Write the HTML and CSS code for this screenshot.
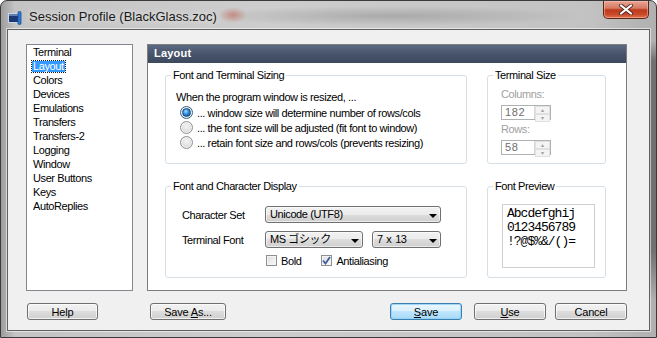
FILE: index.html
```html
<!DOCTYPE html>
<html lang="en">
  <head>
    <meta charset="UTF-8" />
    <title>Session Profile (BlackGlass.zoc)</title>
    <link rel="stylesheet" href="styles.css">
  </head>
  <body>
    <div class="window">
      <div class="titlebar">
        <div class="title">
          <svg class="app-icon" width="14" height="14" viewBox="0 0 14 14">
            <rect x="0.5" y="2.5" width="10" height="9" fill="#1b3a73" stroke="#cdd6e4" />
            <rect x="1" y="3" width="9" height="2" fill="#5e7fb3" />
            <rect x="10" y="0.5" width="3" height="13" rx="1.3" fill="#2b7ad6" stroke="#174f96" stroke-width="0.8" />
          </svg>
          <span>Session Profile (BlackGlass.zoc)</span>
        </div>
        <div class="close-btn">
          <svg width="16" height="11" viewBox="0 0 16 11">
            <path d="M3 1.5 L13 9.5 M13 1.5 L3 9.5" stroke="#5a2a20" stroke-width="4" stroke-linecap="round" />
            <path d="M3 1.5 L13 9.5 M13 1.5 L3 9.5" stroke="#ffffff" stroke-width="2.2" stroke-linecap="round" />
          </svg>
        </div>
      </div>

      <div class="client">
        <div class="main">
          <ul class="nav-list">
            <li>Terminal</li>
            <li class="selected"><span>Layout</span></li>
            <li>Colors</li>
            <li>Devices</li>
            <li>Emulations</li>
            <li>Transfers</li>
            <li>Transfers-2</li>
            <li>Logging</li>
            <li>Window</li>
            <li>User Buttons</li>
            <li>Keys</li>
            <li>AutoReplies</li>
          </ul>

          <div class="panel">
            <div class="panel-header">Layout</div>
            <div class="panel-body">
              <fieldset class="group">
                <legend>Font and Terminal Sizing</legend>
                <div class="intro">When the program window is resized, ...</div>
                <div class="radio-row">
                  <span class="radio checked"></span>
                  <span>... window size will determine number of rows/cols</span>
                </div>
                <div class="radio-row">
                  <span class="radio"></span>
                  <span>... the font size will be adjusted (fit font to window)</span>
                </div>
                <div class="radio-row">
                  <span class="radio"></span>
                  <span>... retain font size and rows/cols (prevents resizing)</span>
                </div>
              </fieldset>

              <fieldset class="group group-size">
                <legend>Terminal Size</legend>
                <div class="field-label">Columns:</div>
                <div class="spin">
                  <span class="spin-value">182</span>
                  <span class="spin-btns">
                    <span class="spin-btn">&#9652;</span>
                    <span class="spin-btn">&#9662;</span>
                  </span>
                </div>
                <div class="field-label">Rows:</div>
                <div class="spin">
                  <span class="spin-value">58</span>
                  <span class="spin-btns">
                    <span class="spin-btn">&#9652;</span>
                    <span class="spin-btn">&#9662;</span>
                  </span>
                </div>
              </fieldset>

              <fieldset class="group">
                <legend>Font and Character Display</legend>
                <div class="form-row">
                  <span class="form-label">Character Set</span>
                  <div class="select select-wide">
                    <span>Unicode (UTF8)</span><span class="arrow"></span>
                  </div>
                </div>
                <div class="form-row">
                  <span class="form-label">Terminal Font</span>
                  <div class="select select-font">
                    <span>MS ゴシック</span><span class="arrow"></span>
                  </div>
                  <div class="select select-size">
                    <span>7 x 13</span><span class="arrow"></span>
                  </div>
                </div>
                <div class="check-row">
                  <span class="check"></span>
                  <span>Bold</span>
                  <span class="check checked">
                    <svg width="9" height="9" viewBox="0 0 9 9">
                      <path d="M1 4.5 L3.5 7.5 L8 1" fill="none" stroke="#3f5aa0" stroke-width="1.8" />
                    </svg>
                  </span>
                  <span>Antialiasing</span>
                </div>
              </fieldset>

              <fieldset class="group group-preview">
                <legend>Font Preview</legend>
                <div class="preview">
                  <div>Abcdefghij</div>
                  <div>0123456789</div>
                  <div>!?@$%&amp;/()=</div>
                </div>
              </fieldset>
            </div>
          </div>
        </div>

        <div class="buttons">
          <button class="btn btn-help">Help</button>
          <button class="btn btn-saveas">Save <u>A</u>s...</button>
          <button class="btn btn-default btn-save"><u>S</u>ave</button>
          <button class="btn btn-use"><u>U</u>se</button>
          <button class="btn btn-cancel">Cancel</button>
        </div>
      </div>
    </div>
  </body>
</html>
```

FILE: styles.css
```css
* {
  margin: 0;
  padding: 0;
  box-sizing: border-box;
}

body {
  width: 657px;
  height: 338px;
  overflow: hidden;
  background: #ffffff;
  font-family: "Liberation Sans", Arial, "Noto Sans CJK JP", sans-serif;
  font-size: 11px;
  letter-spacing: -0.4px;
  color: #000;
}

/* Aero glass frame */
.window {
  width: 657px;
  height: 338px;
  border: 1px solid #3a3a3a;
  border-radius: 7px 7px 0 0;
  padding: 0 6px 6px;
  display: flex;
  flex-direction: column;
  background:
    radial-gradient(ellipse 14px 8px at 232px 14px, rgba(190, 70, 50, 0.45), transparent),
    radial-gradient(ellipse 190px 10px at 390px 15px, rgba(90, 90, 90, 0.28), transparent),
    linear-gradient(to bottom, transparent 0, transparent 40px, rgba(60, 60, 60, 0.55) 60px, rgba(60, 60, 60, 0.55) 250px, transparent 300px) right / 7px 100% no-repeat,
    linear-gradient(to right, #9d9d9d 0, #c4c4c4 14px, #cdcdcd 40%, #c2c2c2 90%, #b0b0b0 100%);
}

.titlebar {
  height: 28px;
  display: flex;
  justify-content: space-between;
  align-items: flex-start;
}

.title {
  display: flex;
  align-items: flex-start;
  gap: 7px;
  padding: 9px 0 0 1px;
  font-size: 13px;
  letter-spacing: 0;
  line-height: 14px;
  color: #1a1a1a;
  text-shadow: 0 0 6px rgba(255, 255, 255, 0.9);
}

.app-icon {
  margin-top: 1px;
}

.close-btn {
  width: 46px;
  height: 18px;
  margin-right: 1px;
  border: 1px solid #5e2418;
  border-top: none;
  border-radius: 0 0 5px 5px;
  background: linear-gradient(#e8a493 0%, #d67b64 42%, #bf3a1d 52%, #c9482a 78%, #e2734f 100%);
  box-shadow: inset 0 0 0 1px rgba(255, 210, 190, 0.45);
  display: flex;
  align-items: center;
  justify-content: center;
}

.client {
  flex: 1;
  display: flex;
  flex-direction: column;
  background: #f0f0f0;
  border: 1px solid #5f5f5f;
  box-shadow: 0 0 0 1px rgba(255, 255, 255, 0.55);
  padding: 14px 22px 0 18px;
}

.main {
  height: 247px;
  display: flex;
  gap: 14px;
}

/* left category list */
.nav-list {
  list-style: none;
  width: 108px;
  background: #ffffff;
  border: 1px solid #828790;
  padding: 0 0 0 5px;
}

.nav-list li {
  height: 14px;
  line-height: 14px;
  padding-left: 1px;
}

.nav-list .selected {
  padding-left: 0;
}

.nav-list .selected span {
  display: inline-block;
  height: 11px;
  line-height: 10px;
  margin-top: 2px;
  padding: 0 1px;
  background: #3399ff;
  color: #fff;
  outline: 1px dotted #1a1a1a;
}

/* right settings panel */
.panel {
  flex: 1;
  background: #ffffff;
  border: 1px solid #7d7d7d;
}

.panel-header {
  height: 18px;
  line-height: 17px;
  padding-left: 6px;
  background: linear-gradient(#5b6882, #46536a 55%, #3d495d);
  color: #ffffff;
  font-weight: bold;
  letter-spacing: 0.2px;
}

.panel-body {
  display: grid;
  grid-template-columns: 302px 119px;
  grid-template-rows: 95px 98px;
  column-gap: 20px;
  row-gap: 16px;
  padding: 6px 20px 0 17px;
}

.group {
  border: 1px solid #d5dfe5;
  border-radius: 3px;
  min-width: 0;
}

.group legend {
  line-height: 13px;
  margin-left: 5px;
  padding: 0 2px;
}

.intro {
  line-height: 15px;
  margin-top: 8px;
  padding-left: 10px;
}

.radio-row {
  height: 15px;
  display: flex;
  align-items: center;
  gap: 4px;
  padding-left: 14px;
}

.radio {
  width: 13px;
  height: 13px;
  border-radius: 50%;
  border: 1px solid #8e8f8f;
  background: radial-gradient(circle at 50% 40%, #f4f4f4 0, #e2e2e2 50%, #c9c9c9 100%);
  box-shadow: inset 0 0 0 1px rgba(255, 255, 255, 0.7);
  display: flex;
  align-items: center;
  justify-content: center;
}

.radio.checked {
  border-color: #2c628b;
}

.radio.checked::after {
  content: "";
  width: 7px;
  height: 7px;
  border-radius: 50%;
  background: radial-gradient(circle at 40% 35%, #a8dcff 0, #2d8ae0 45%, #0b4c8c 100%);
  border: 1px solid #174a7a;
}

/* terminal size spinners (disabled) */
.field-label {
  line-height: 15px;
  padding-left: 13px;
  margin-top: 5px;
  color: #a0a0a0;
}

.field-label + .spin {
  margin-top: 3px;
}

.spin + .field-label {
  margin-top: 2px;
}

.spin {
  width: 50px;
  height: 15px;
  margin-left: 13px;
  border: 1px solid #adb2b5;
  background: #ffffff;
  display: flex;
  justify-content: space-between;
}

.spin-value {
  padding-left: 3px;
  line-height: 13px;
  color: #6d6d6d;
  letter-spacing: 0.6px;
}

.spin-btns {
  width: 16px;
  display: flex;
  flex-direction: column;
  border-left: 1px solid #d9d9d9;
}

.spin-btn {
  flex: 1;
  font-size: 6px;
  line-height: 6px;
  text-align: center;
  color: #a0a0a0;
  background: #f4f4f4;
  border: 1px solid #e0e0e0;
}

/* character display */
.form-row {
  height: 17px;
  display: flex;
  align-items: center;
  padding-left: 16px;
  margin-top: 8px;
}

legend + .form-row {
  margin-top: 13px;
}

.form-label {
  width: 83px;
}

.select {
  height: 17px;
  border: 1px solid #707070;
  border-radius: 3px;
  background: linear-gradient(#f2f2f2 0%, #ebebeb 50%, #dddddd 50%, #cfcfcf 100%);
  box-shadow: inset 0 0 0 1px rgba(255, 255, 255, 0.6);
  display: flex;
  align-items: center;
  justify-content: space-between;
  padding: 0 3px 0 4px;
  line-height: 15px;
}

.select-wide {
  width: 176px;
}

.select-font {
  width: 98px;
}

.select-size {
  width: 69px;
  margin-left: 9px;
  word-spacing: 1px;
}

.arrow {
  width: 0;
  height: 0;
  margin-top: 2px;
  border-left: 4px solid transparent;
  border-right: 4px solid transparent;
  border-top: 4px solid #000;
}

.check-row {
  height: 13px;
  display: flex;
  align-items: center;
  gap: 4px;
  padding-left: 100px;
  margin-top: 6px;
}

.check {
  width: 11px;
  height: 11px;
  border: 1px solid #8e8f8f;
  background: linear-gradient(135deg, #dcdcdc, #fbfbfb);
  box-shadow: inset 0 0 0 1px #f4f4f4;
  display: flex;
  align-items: center;
  justify-content: center;
}

.check.checked {
  margin-left: 16px;
}

/* font preview */
.preview {
  width: 93px;
  height: 64px;
  margin: 11px 0 0 14px;
  border: 1px solid #cfcfcf;
  padding: 2px 0 0 4px;
  font-family: "Liberation Mono", "DejaVu Sans Mono", monospace;
  font-size: 13px;
  letter-spacing: -1px;
  line-height: 14px;
}

/* dialog buttons */
.buttons {
  display: flex;
  margin-top: 12px;
}

.btn {
  height: 17px;
  border: 1px solid #707070;
  border-radius: 3px;
  background: linear-gradient(#f2f2f2 0%, #ebebeb 50%, #dddddd 50%, #cfcfcf 100%);
  box-shadow: inset 0 0 0 1px rgba(255, 255, 255, 0.7);
  font-family: inherit;
  font-size: 11px;
  letter-spacing: -0.2px;
  line-height: 14px;
  color: #000;
}

.btn-default {
  border-color: #3c7fb1;
  background: linear-gradient(#eaf6fd 0%, #d9f0fc 50%, #bee6fd 50%, #a7d9f5 100%);
  box-shadow: inset 0 0 0 1px rgba(140, 210, 245, 0.8);
}

.btn-help {
  width: 71px;
  margin-left: 1px;
}

.btn-saveas {
  width: 76px;
  margin-left: 52px;
}

.btn-save {
  width: 72px;
  margin-left: auto;
}

.btn-use {
  width: 72px;
  margin-left: 12px;
}

.btn-cancel {
  width: 72px;
  margin-left: 9px;
}
```
